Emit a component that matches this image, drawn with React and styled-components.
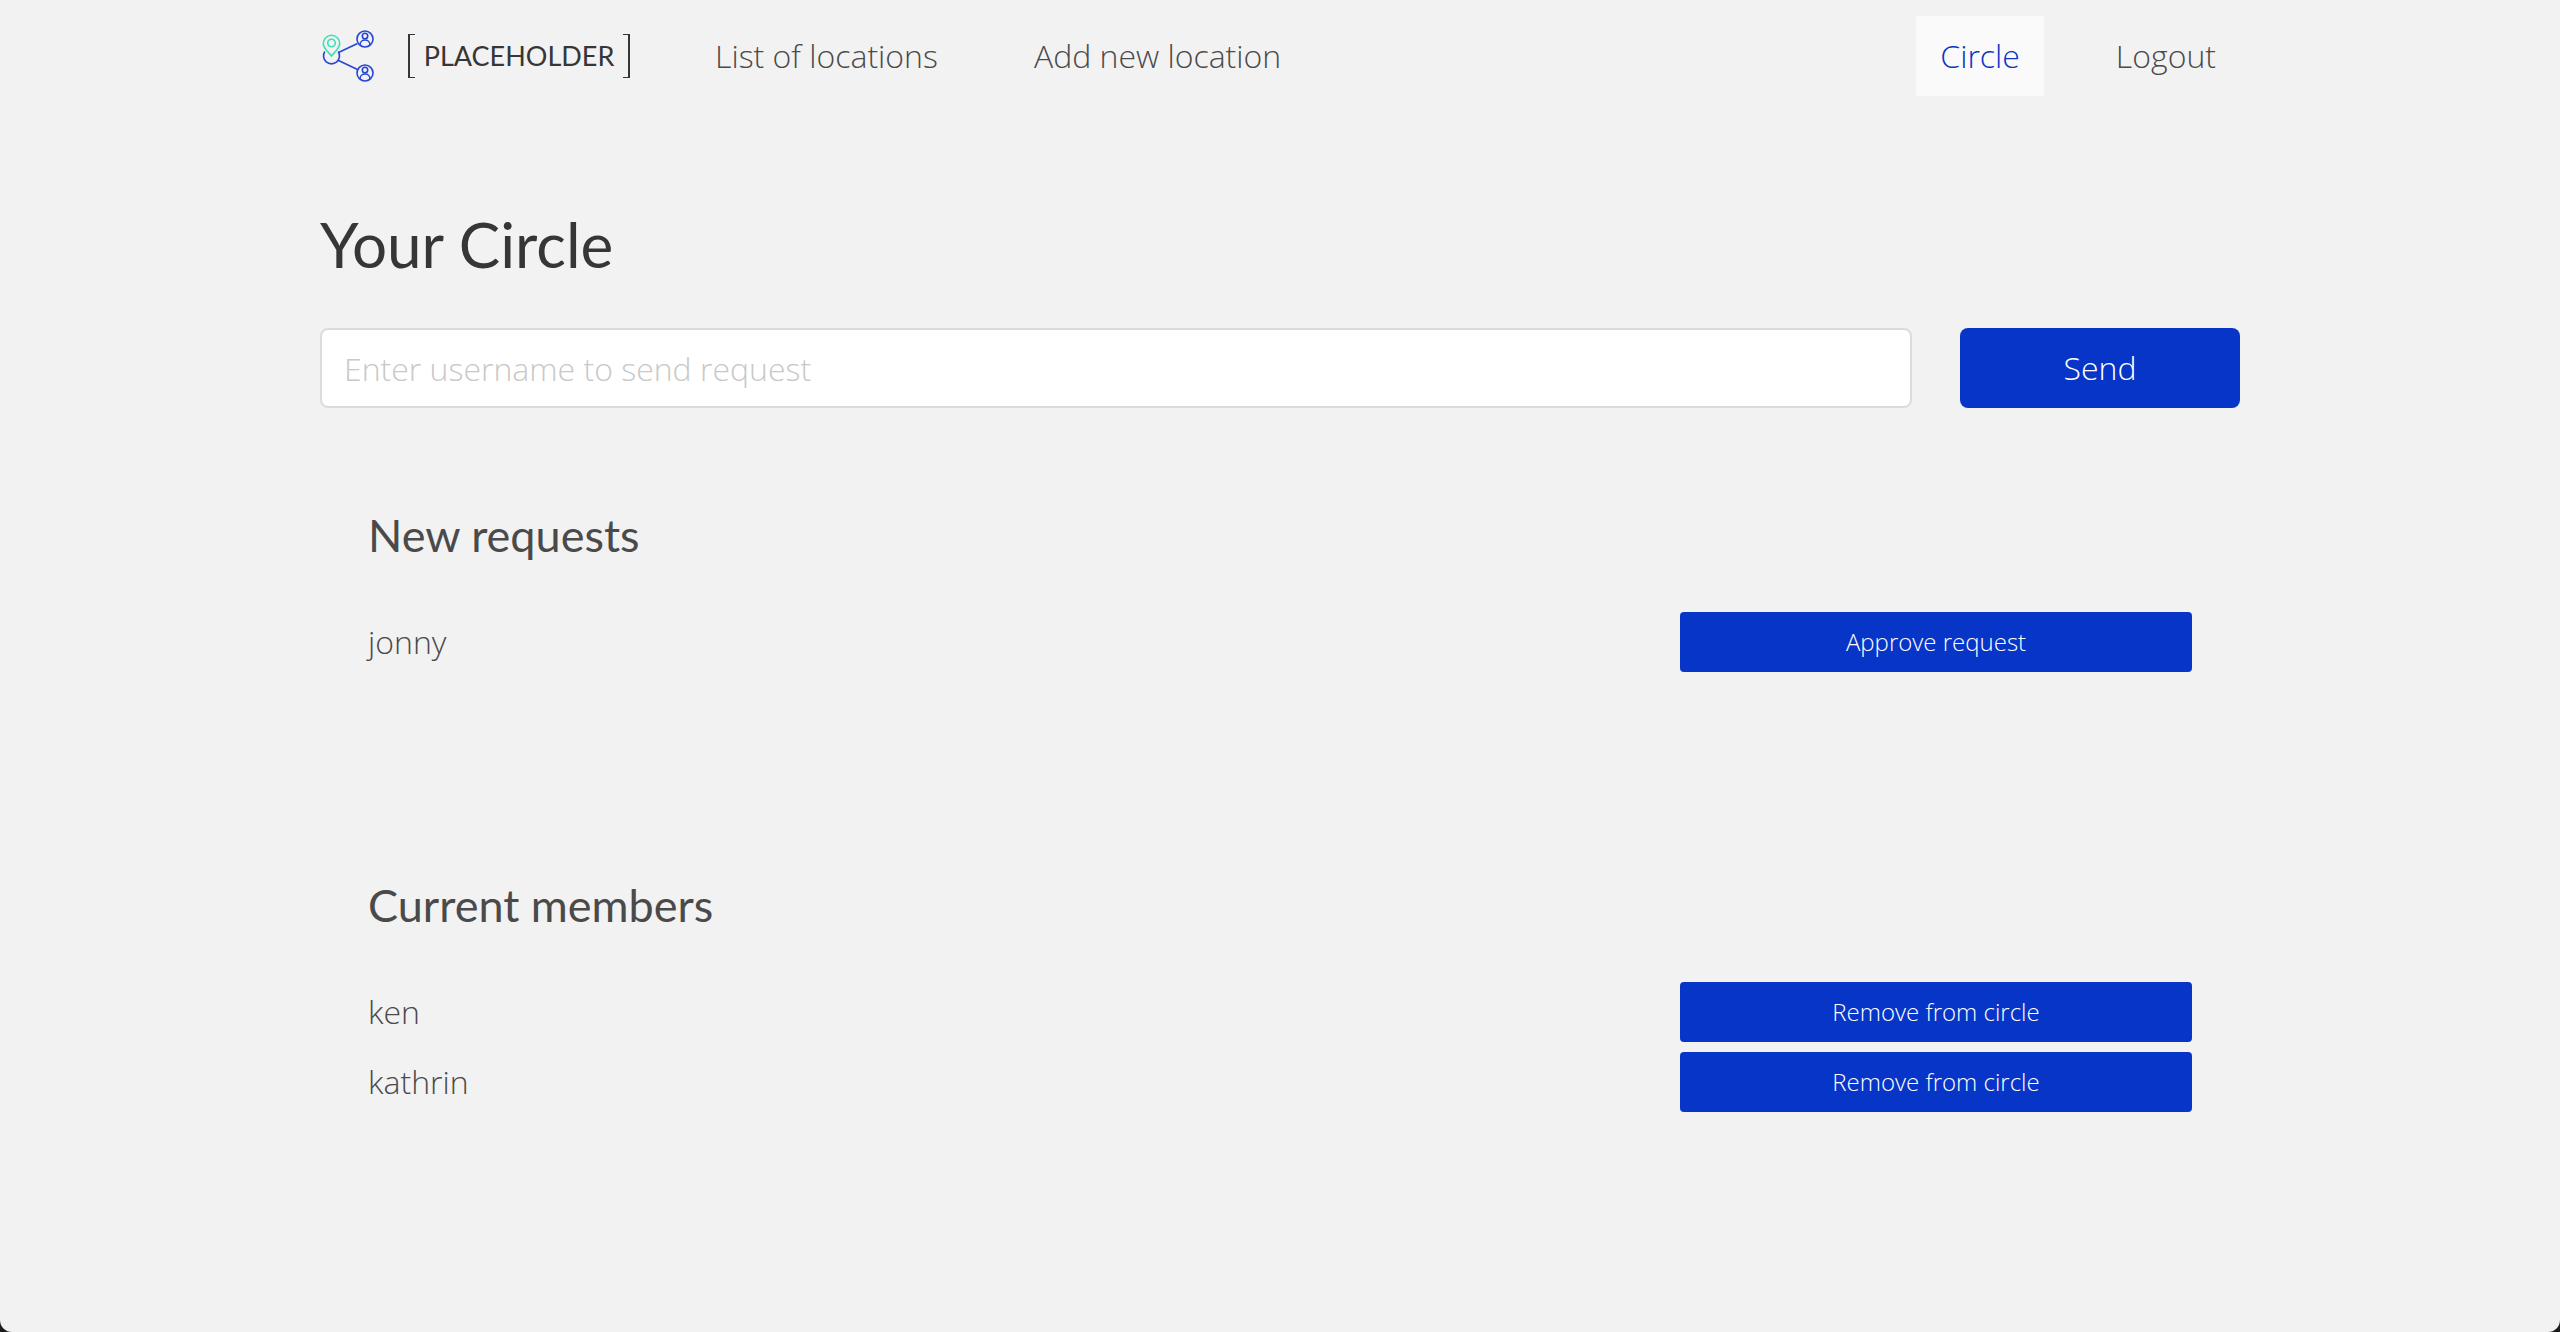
import React from "react";
import styled, { createGlobalStyle } from "styled-components";

const GlobalStyle = createGlobalStyle`
  *, *::before, *::after { box-sizing: border-box; }
  html { background: #1c1c1c; }
  body {
    margin: 0;
    color: #4a4a4a;
    font-family: "Open Sans", "Noto Sans", sans-serif;
    font-size: 32px;
    font-weight: 300;
    line-height: 48px;
  }
  button, input { font: inherit; }
`;

const Page = styled.div`
  min-height: 100vh;
  background: #f2f2f2;
  border-radius: 0 0 12px 12px;
`;

const Container = styled.div`
  width: 100%;
  max-width: 1920px;
  margin: 0 auto;
`;

const Navbar = styled(Container).attrs({ as: "nav" })`
  display: flex;
  align-items: center;
  gap: 48px;
  padding: 16px 0;
`;

const Brand = styled.a`
  display: flex;
  align-items: center;
  gap: 28px;
  width: 323px;
  color: #363636;
  text-decoration: none;
`;

const Mark = styled.svg`
  display: block;
  width: 60px;
  height: 56px;
  fill: none;
  stroke: #2746d3;
  stroke-width: 1.6;
`;

const Wordmark = styled.span`
  position: relative;
  width: 222px;
  height: 44px;
  font-family: Lato, sans-serif;
  font-size: 27px;
  font-weight: 400;
  line-height: 44px;
  text-align: center;

  &::before, &::after {
    content: "";
    position: absolute;
    top: 0;
    width: 7px;
    height: 44px;
    border: 1px solid #363636;
  }
  &::before { left: 0; border-left-width: 2px; border-right: 0; }
  &::after { right: 0; border-right-width: 2px; border-left: 0; }
`;

const NavGroup = styled.div`
  display: flex;
  gap: 48px;
  margin-left: ${(p) => (p.$end ? "auto" : "0")};
`;

const NavLink = styled.a`
  padding: 16px 24px;
  color: ${(p) => (p.$active ? "#0735c8" : "#4a4a4a")};
  background: ${(p) => (p.$active ? "#fafafa" : "transparent")};
  text-decoration: none;
`;

const Main = styled(Container).attrs({ as: "main" })`
  padding: 92px 0 48px;
`;

const Title = styled.h1`
  margin: 0 0 44px;
  color: #363636;
  font-family: Lato, sans-serif;
  font-size: 62px;
  font-weight: 400;
  line-height: 80px;
`;

const RequestForm = styled.form`
  display: grid;
  grid-template-columns: minmax(0, 1fr) 280px;
  gap: 48px;
`;

const TextInput = styled.input`
  width: 100%;
  height: 80px;
  padding: 0 22px;
  color: #363636;
  background: #fff;
  border: 2px solid #dbdbdb;
  border-radius: 8px;
  &::placeholder { color: #c8c8c8; opacity: 1; }
`;

const Button = styled.button`
  height: ${(p) => (p.$small ? "60px" : "80px")};
  padding: 0 24px;
  color: #fff;
  background: #0735c8;
  border: 0;
  border-radius: ${(p) => (p.$small ? "4px" : "8px")};
  font-size: ${(p) => (p.$small ? "24px" : "32px")};
`;

const Section = styled.section`
  padding: 96px 48px;
`;

const Subtitle = styled.h2`
  margin: 0 0 46px;
  color: #4a4a4a;
  font-family: Lato, sans-serif;
  font-size: 45px;
  font-weight: 400;
  line-height: 62px;
`;

const People = styled.ul`
  margin: 0;
  padding: 0;
  list-style: none;
`;

const Person = styled.li`
  display: grid;
  grid-template-columns: minmax(0, 1fr) 512px;
  align-items: center;
  padding-bottom: 10px;
`;

function Member({ x, y }) {
  return (
    <g transform={`translate(${x} ${y})`}>
      <circle r="8" />
      <circle cy="-3" r="2.7" />
      <path d="M-5 6C-5 -0.6 5 -0.6 5 6" />
    </g>
  );
}

function Logo() {
  return (
    <Mark viewBox="0 0 60 56" aria-hidden="true">
      <path d="M4.8 23.5A8 8 0 1 0 18.2 23.5M18.5 24.5L37.5 15.5M18.5 32.5L37.5 41.5" />
      <Member x={45} y={11} />
      <Member x={45} y={45} />
      <g stroke="#3be0b5">
        <path d="M11.5 28C8.5 24 3.3 20.5 3.3 15.5A8.2 8.2 0 0 1 19.7 15.5C19.7 20.5 14.5 24 11.5 28Z" />
        <circle cx="11.5" cy="15" r="3.8" />
      </g>
    </Mark>
  );
}

function PeopleSection({ title, people, action }) {
  return (
    <Section>
      <Subtitle>{title}</Subtitle>
      <People>
        {people.map((name) => (
          <Person key={name}>
            <span>{name}</span>
            <Button type="button" $small>{action}</Button>
          </Person>
        ))}
      </People>
    </Section>
  );
}

export default function App() {
  return (
    <>
      <GlobalStyle />
      <Page>
        <Navbar>
          <Brand href="#">
            <Logo />
            <Wordmark>PLACEHOLDER</Wordmark>
          </Brand>
          <NavGroup>
            <NavLink href="#locations">List of locations</NavLink>
            <NavLink href="#new">Add new location</NavLink>
          </NavGroup>
          <NavGroup $end>
            <NavLink href="#circle" $active aria-current="page">Circle</NavLink>
            <NavLink href="#logout">Logout</NavLink>
          </NavGroup>
        </Navbar>
        <Main>
          <Title>Your Circle</Title>
          <RequestForm onSubmit={(e) => e.preventDefault()}>
            <TextInput
              type="text"
              name="username"
              aria-label="Username"
              placeholder="Enter username to send request"
            />
            <Button type="submit">Send</Button>
          </RequestForm>
          <PeopleSection title="New requests" people={["jonny"]} action="Approve request" />
          <PeopleSection title="Current members" people={["ken", "kathrin"]} action="Remove from circle" />
        </Main>
      </Page>
    </>
  );
}
